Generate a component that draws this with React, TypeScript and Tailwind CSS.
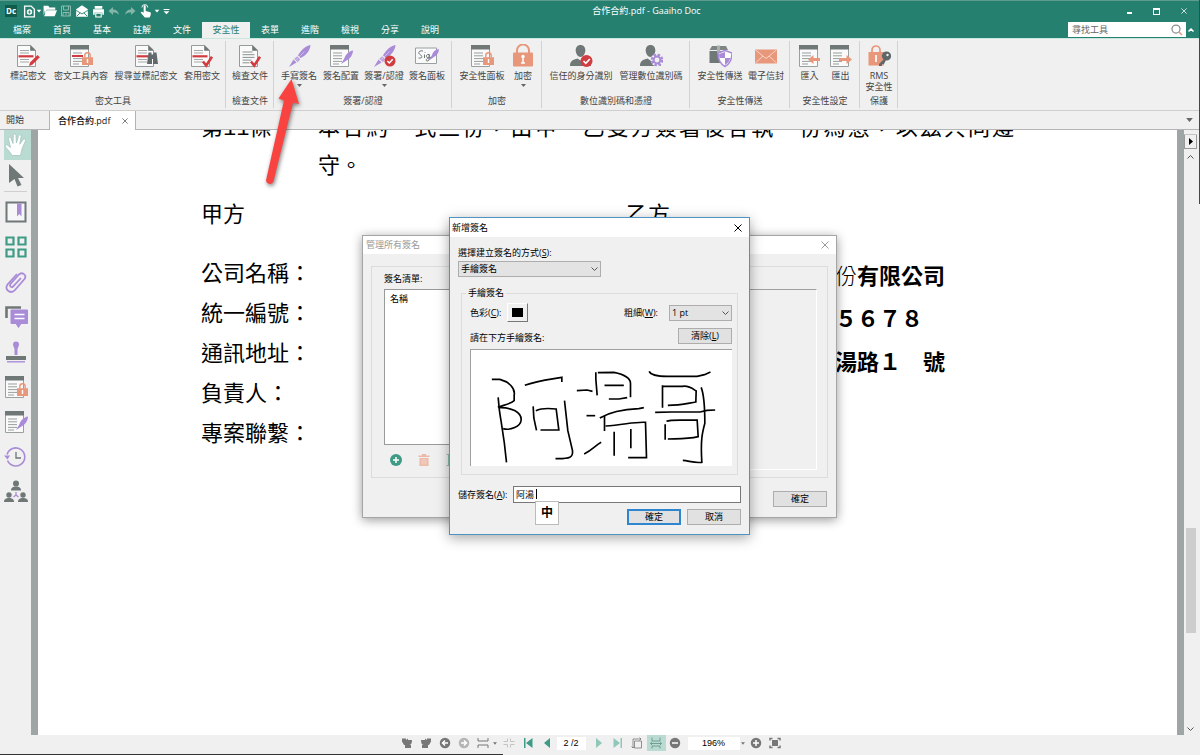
import type { ReactNode } from 'react';
import clsx from 'clsx';

const GRAY = '#6f7777';
const RED = '#d03c3f';
const SALMON = '#e8977a';
const PURPLE = '#a98bd8';
const GREEN = '#3f9b85';

function Icon({ size = 24, children }: { size?: number; children: ReactNode }) {
  return (
    <svg width={size} height={size} viewBox="0 0 24 24" fill="none" className="shrink-0">
      {children}
    </svg>
  );
}

/* ---------- shared icon pieces ---------- */

const Page = ({ redact = false }: { redact?: boolean }) => (
  <>
    <path d="M1.5 1.5h13.2l4.8 4.8v16.2h-18z" fill="#fafafa" stroke="#959b9b" />
    <path d="M14.2 1v5.8H20z" fill={GRAY} />
    {redact ? (
      <>
        <path d="M4 6.5h9M4 9h9M4 15.5h9M4 18h9" stroke="#a5a9a9" />
        <path d="M2.5 12.3h15" stroke={RED} strokeWidth="2.2" />
      </>
    ) : (
      <path d="M4.5 8h10M4.5 10.7h12M4.5 13.4h12M4.5 16.1h9M4.5 18.8h7" stroke="#8b9090" />
    )}
  </>
);

const Panel = ({ redact = false }: { redact?: boolean }) => (
  <>
    <path d="M1.5 2v20.5h18V2" fill="#fafafa" stroke="#9aa0a0" />
    <path d="M1 1h19v4.5H1z" fill={GRAY} />
    <path d="M4 9h9M4 11.8h9M4 14.6h9M4 17.4h9M4 20h6" stroke="#989d9d" />
    {redact && <path d="M3 12h11" stroke={RED} strokeWidth="2" />}
  </>
);

const Check = () => <path d="M13 17.5l3.2 4L22 12.8" stroke={RED} strokeWidth="2.6" />;

const SmallLock = () => (
  <>
    <path d="M15.8 13.5v-2a2.7 2.7 0 015.4 0v2" stroke={SALMON} strokeWidth="1.4" />
    <path d="M13 13.2h11V21H13z" fill={SALMON} />
    <path d="M18.5 15v4" stroke="#fff" strokeWidth="1.4" />
  </>
);

const Quill = () => (
  <>
    <path d="M23.5 1c-5 1-9.500 5-12.500 10.500l2.500 2.500C18.500 12 23 7 23.500 1z" fill={PURPLE} />
    <path d="M10.200 12.300l3 3-2.400 3-3.600-3.600z" fill="#bda5e2" />
    <path d="M6.500 15.500l3 3L2 23z" fill={PURPLE} />
    <path d="M9.500 15.500l8-8" stroke="#d6c8ee" strokeWidth=".8" />
  </>
);

const SmallQuill = () => (
  <path d="M24 6.500c-4 .5-7.500 4-8.500 7.500l-3.500 6 5.500-3.500c3.500-1.500 6.500-6 6.500-10z" fill={PURPLE} />
);

const Person = () => (
  <>
    <path d="M11.500 1c3 0 4.800 2.200 4.800 5.300 0 3.400-2.100 6.700-4.800 6.700s-4.800-3.300-4.800-6.700C6.700 3.200 8.500 1 11.500 1z" fill={GRAY} />
    <path d="M1 22c0-5 3-6.500 7.500-7.500l3 2 3-2C19 15.500 22 17 22 22z" fill={GRAY} />
  </>
);

const icons: Record<string, ReactNode> = {
  mark: (
    <>
      <Page redact />
      <path d="M13 22l1-3.500 7.500-7.500 2.300 2.300-7.500 7.500z" fill={RED} />
    </>
  ),
  panelLock: (
    <>
      <Panel redact />
      <SmallLock />
    </>
  ),
  find: (
    <>
      <Page redact />
      <path d="M14.500 8.500h3v2h2v-2h3L24 20h-5v-5h-1v5h-5z" fill="#62696d" />
    </>
  ),
  apply: (
    <>
      <Page redact />
      <Check />
    </>
  ),
  inspect: (
    <>
      <Page />
      <Check />
    </>
  ),
  quill: <Quill />,
  panelQuill: (
    <>
      <Panel />
      <SmallQuill />
    </>
  ),
  signCheck: (
    <>
      <Quill />
      <circle cx="18" cy="17" r="5.500" fill={RED} />
      <path d="M15.300 17l2 2 3.400-3.800" stroke="#fff" strokeWidth="1.500" />
    </>
  ),
  signPanel: (
    <>
      <path d="M.5 4h21v15.500H.5z" fill="#fafafa" stroke="#9aa0a0" />
      <path
        d="M8 7C4 6 2.500 9 5 10.500s3 4-1.500 3.500M9.500 10.500v3.500M10 8v.6M14 10.500c-3-1-3.500 3.500-1 3.200 1 0 1.300-2 1.300-3.200 0 3 .4 6-1.300 6.500-2 .4-2.500-1.500-.5-2.500l4-1.500"
        stroke={GRAY}
      />
      <path d="M24 5c-4 .5-6 3-7 6l-3 5.500 5-3.500c3-1.500 5-4.500 5-8z" fill={PURPLE} />
    </>
  ),
  securityPanel: (
    <>
      <Panel />
      <SmallLock />
    </>
  ),
  lock: (
    <>
      <path d="M6 9V6.500a6 6 0 0112 0V9" stroke={SALMON} strokeWidth="2" />
      <rect x="2" y="8.500" width="20" height="14" rx="1" fill={SALMON} />
      <path d="M12 12v7M10 19h4" stroke="#fff" strokeWidth="1.500" />
      <circle cx="12" cy="12.500" r="1.700" fill="#fff" />
    </>
  ),
  trusted: (
    <>
      <Person />
      <circle cx="17.500" cy="17" r="6" fill={RED} />
      <path d="M14.500 17l2.300 2.300 4-4.300" stroke="#fff" strokeWidth="1.700" />
    </>
  ),
  manageId: (
    <>
      <Person />
      <circle cx="18" cy="16" r="6.400" fill="#f0f0f0" />
      <circle cx="18" cy="16" r="5" stroke={PURPLE} strokeWidth="2.600" strokeDasharray="2.400 1.530" />
      <circle cx="18" cy="16" r="3.400" stroke={PURPLE} strokeWidth="2" />
    </>
  ),
  send: (
    <>
      <path d="M4 2h14l2 4H1.500z" fill="#7f8585" />
      <path d="M1.500 7h18v12h-18z" fill={GRAY} />
      <path d="M9 1.500h3V9H9z" fill="#aab0b0" />
      <path d="M17 6.500l7 2.500c0 7-2.500 11-7 13.500-4.500-2.500-7-6.500-7-13.500z" fill="#fff" stroke={PURPLE} strokeWidth="1.500" />
      <path d="M17 8v6h-5.300c-.5-1.500-.6-2.500-.7-4zM17 14h5.300c-.8 3-2.300 5-5.300 7z" fill={PURPLE} />
    </>
  ),
  envelope: (
    <>
      <path d="M1 5.500h22v14H1z" fill={SALMON} />
      <path d="M1.500 6L12 14.500 22.500 6M1.500 19l7.500-7M22.500 19L15 12" stroke="#f7d5c8" />
    </>
  ),
  importDoc: (
    <>
      <Panel />
      <path d="M10 15.500l5.500-4.500v3H22v3h-6.500v3z" fill={SALMON} />
    </>
  ),
  exportDoc: (
    <>
      <Panel />
      <path d="M23 15.500L17.500 11v3H10v3h7.500v3z" fill={SALMON} />
    </>
  ),
  rms: (
    <>
      <path d="M5 8V6a4 4 0 018 0v2" stroke={SALMON} strokeWidth="1.700" />
      <path d="M1.500 8h15.500v13.500H1.500z" fill={SALMON} />
      <path d="M9 11v7" stroke="#fff" strokeWidth="1.700" />
      <circle cx="19.500" cy="12" r="3.500" stroke="#5f6769" strokeWidth="2.200" fill="#5f6769" />
      <path d="M17.500 14.500L12 20v2h3v-2h2l2-4" fill="#5f6769" />
      <circle cx="20.500" cy="11" r="1.200" fill="#f0f0f0" />
    </>
  ),
};

type Tool = { label: string; icon: string; width: string; menu?: boolean };

const groups: { title: string; tools: Tool[] }[] = [
  {
    title: '密文工具',
    tools: [
      { label: '標記密文', icon: 'mark', width: 'w-12' },
      { label: '密文工具內容', icon: 'panelLock', width: 'w-[58px]' },
      { label: '搜尋並標記密文', icon: 'find', width: 'w-[72px]' },
      { label: '套用密文', icon: 'apply', width: 'w-10' },
    ],
  },
  { title: '檢查文件', tools: [{ label: '檢查文件', icon: 'inspect', width: 'w-10' }] },
  {
    title: '簽署/認證',
    tools: [
      { label: '手寫簽名', icon: 'quill', width: 'w-[42px]', menu: true },
      { label: '簽名配置', icon: 'panelQuill', width: 'w-[42px]' },
      { label: '簽署/認證', icon: 'signCheck', width: 'w-11', menu: true },
      { label: '簽名面板', icon: 'signPanel', width: 'w-[42px]' },
    ],
  },
  {
    title: '加密',
    tools: [
      { label: '安全性面板', icon: 'securityPanel', width: 'w-[52px]' },
      { label: '加密', icon: 'lock', width: 'w-[30px]', menu: true },
    ],
  },
  {
    title: '數位識別碼和憑證',
    tools: [
      { label: '信任的身分識別', icon: 'trusted', width: 'w-[70px]' },
      { label: '管理數位識別碼', icon: 'manageId', width: 'w-[70px]' },
    ],
  },
  {
    title: '安全性傳送',
    tools: [
      { label: '安全性傳送', icon: 'send', width: 'w-[52px]' },
      { label: '電子信封', icon: 'envelope', width: 'w-10' },
    ],
  },
  {
    title: '安全性設定',
    tools: [
      { label: '匯入', icon: 'importDoc', width: 'w-[31px]' },
      { label: '匯出', icon: 'exportDoc', width: 'w-[31px]' },
    ],
  },
  { title: '保護', tools: [{ label: 'RMS\n安全性', icon: 'rms', width: 'w-[30px]' }] },
];

const menuTabs = ['檔案', '首頁', '基本', '註解', '文件', '安全性', '表單', '進階', '檢視', '分享', '說明'];

const Caret = ({ className }: { className?: string }) => (
  <svg width="5" height="3" viewBox="0 0 5 3" fill="currentColor" className={className}>
    <path d="M0 0h5L2.500 3z" />
  </svg>
);

const Cross = ({ size = 8 }: { size?: number }) => (
  <svg width={size} height={size} viewBox="0 0 8 8" fill="none" stroke="currentColor">
    <path d="M.5.5l7 7M7.500.5l-7 7" />
  </svg>
);

/* ---------- title bar ---------- */

const quickTools: { name: string; width: string; size: number; art: ReactNode }[] = [
  {
    name: '新增',
    width: 'w-[14px]',
    size: 13,
    art: (
      <>
        <path d="M3 2h12l6 6v14H3z" stroke="#fff" strokeWidth="2.500" />
        <circle cx="12" cy="13" r="5" fill="#fff" />
        <path d="M12 10v6M9 13h6" stroke="#26806f" strokeWidth="1.500" />
      </>
    ),
  },
  { name: '新增選單', width: 'w-[6px]', size: 6, art: <path d="M3 7h18l-9 11z" fill="#fff" /> },
  {
    name: '開啟',
    width: 'w-4',
    size: 14,
    art: <path d="M1 3h8l2 3h10v4H6l-3 8V10L1 20zM6 10.500h18L20 21H2z" fill="#fff" />,
  },
  {
    name: '儲存',
    width: 'w-4',
    size: 12,
    art: (
      <>
        <path d="M3 2h18v20H3z" stroke="#8abcae" strokeWidth="2" />
        <path d="M7 2v8h10V2M6 22v-7h12v7M10 18h4" stroke="#8abcae" strokeWidth="2" />
      </>
    ),
  },
  {
    name: '郵件',
    width: 'w-4',
    size: 14,
    art: (
      <>
        <path d="M2 9L12 2l10 7v13H2z" fill="#fff" />
        <path d="M2 11l10 6 10-6M3 21l6-6M21 21l-6-6" stroke="#26806f" strokeWidth="1.500" />
      </>
    ),
  },
  {
    name: '列印',
    width: 'w-4',
    size: 13,
    art: (
      <>
        <path d="M5 2h14v5H5zM2 8h20v10h-3v-4H5v4H2z" fill="#fff" />
        <path d="M7 15h10v7H7z" stroke="#fff" strokeWidth="2" />
      </>
    ),
  },
  { name: '復原', width: 'w-4', size: 12, art: <path d="M10 4v5c7 0 11 4 12 11-3-4-6-5-12-5v5L1 12z" fill="#83b5a9" /> },
  { name: '重做', width: 'w-4', size: 12, art: <path d="M14 4v5C7 9 3 13 2 20c3-4 6-5 12-5v5l9-8z" fill="#83b5a9" /> },
  {
    name: '觸控',
    width: 'w-4',
    size: 14,
    art: (
      <>
        <path d="M8 4c0-2.500 3.500-2.500 3.500 0v8l8 2c1.500 1 1 6-1.500 9h-8L3 15c0-2 2-2.500 5 0z" fill="#fff" />
        <path d="M5 6a5 5 0 0110 0" stroke="#fff" strokeWidth="1.500" />
      </>
    ),
  },
  { name: '觸控選單', width: 'w-[6px]', size: 6, art: <path d="M3 7h18l-9 11z" fill="#fff" /> },
  { name: '自訂', width: 'w-3', size: 7, art: <path d="M2 3h20v4H2zM2 11h20L12 21z" fill="#fff" /> },
];

function TitleBar() {
  return (
    <header className="border-t border-[#5c9d8f] bg-[#26806f] text-white">
      <div className="grid h-[20px] grid-cols-[1fr_auto_1fr] items-center">
        <div className="flex items-center">
          <div className="flex w-[22px] justify-center">
            <span className="flex h-3 w-3 items-center justify-center bg-[#0f5b4c] text-[8px] leading-3 font-bold">Dc</span>
          </div>
          {quickTools.map((tool) => (
            <button key={tool.name} aria-label={tool.name} className={clsx('flex justify-center', tool.width)}>
              <Icon size={tool.size}>{tool.art}</Icon>
            </button>
          ))}
        </div>
        <h1 className="pl-[93px] text-[9px] leading-3">合作合約.pdf - Gaaiho Doc</h1>
        <div className="flex justify-end pr-[3px]">
          <button aria-label="最小化" className="flex w-[27px] items-center justify-center pt-1">
            <span className="h-0.5 w-[5px] bg-white" />
          </button>
          <button aria-label="最大化" className="flex w-[27px] items-center justify-center">
            <span className="h-[7px] w-[7px] border border-t-2 border-white" />
          </button>
          <button aria-label="關閉" className="flex w-[27px] items-center justify-center">
            <Cross size={6} />
          </button>
        </div>
      </div>
      <div className="flex h-[17px] items-end justify-between">
        <nav className="flex pl-0.5 text-[9px]">
          {menuTabs.map((tab) => (
            <button
              key={tab}
              className={clsx('h-4 leading-4', tab === '安全性' ? 'w-12 bg-[#f0f0f0] text-[#26806f]' : 'w-10 text-white')}
            >
              {tab}
            </button>
          ))}
        </nav>
        <div className="mb-px flex items-center gap-0.5 pr-1.5">
          <label className="flex h-[15px] w-[118px] items-center bg-white pr-[3px]">
            <input
              type="search"
              aria-label="尋找工具"
              placeholder="尋找工具"
              className="w-0 flex-1 px-1 text-[9px] leading-3 text-black outline-none placeholder:text-[#666]"
            />
            <Icon size={12}>
              <circle cx="10" cy="10" r="8" stroke="#8a8f8f" strokeWidth="2.500" />
              <path d="M16 16l6 6" stroke={SALMON} strokeWidth="3" />
            </Icon>
          </label>
          <button aria-label="收合功能區">
            <svg width="6" height="4" viewBox="0 0 6 4" fill="none" stroke="#fff" strokeWidth="1.500">
              <path d="M.5 3.500L3 1l2.500 2.500" />
            </svg>
          </button>
        </div>
      </div>
    </header>
  );
}

function Ribbon() {
  return (
    <section className="flex h-[73px] border-t border-b border-t-[#c9e6df] border-b-[#cfcfcf] bg-[#f0f0f0] py-0.5 text-[9px] text-[#444]">
      {groups.map((group) => (
        <div key={group.title} className="flex flex-col border-r border-[#d2d2d2] pr-[3px] pl-1">
          <div className="flex flex-1">
            {group.tools.map((tool) => (
              <button key={tool.label} className={clsx('flex flex-col items-center pt-[3px]', tool.width)}>
                <Icon>{icons[tool.icon]}</Icon>
                <span className="mt-0.5 leading-[11px] whitespace-pre">{tool.label}</span>
                {tool.menu && <Caret className="mt-[3px] text-[#666]" />}
              </button>
            ))}
          </div>
          <div className="text-center leading-[14px] whitespace-nowrap">{group.title}</div>
        </div>
      ))}
    </section>
  );
}

function FileTabs() {
  return (
    <div className="flex h-[19px] items-stretch border-b border-[#b4b4b4] bg-[#f0f0f0] text-[9px] text-[#333]">
      <button className="w-[49px] pl-1.5 text-left">開始</button>
      <div className="-mb-px flex w-[87px] items-center justify-between border-x border-[#b4b4b4] bg-white pr-[7px] pl-2">
        <button className="font-medium text-[#111]">合作合約.pdf</button>
        <button aria-label="關閉分頁" className="text-[#555]">
          <Cross size={6} />
        </button>
      </div>
      <button aria-label="分頁清單" className="ml-auto px-[7px] text-[#666]">
        <Caret className="h-1 w-[7px]" />
      </button>
    </div>
  );
}

/* ---------- side bar ---------- */

const sideTools: { name: string; art: ReactNode }[] = [
  {
    name: '書籤',
    art: (
      <>
        <path d="M2.500 2.500h19v19h-19z" fill="#f7f7f7" stroke={GRAY} strokeWidth="2" />
        <path d="M13 3.500h4.500v13L15.200 14 13 16.500z" fill={PURPLE} />
      </>
    ),
  },
  {
    name: '縮圖',
    art: <path d="M2.500 2.500h7v7h-7zM14.500 2.500h7v7h-7zM2.500 14.500h7v7h-7zM14.500 14.500h7v7h-7z" stroke={GREEN} strokeWidth="2.200" />,
  },
  {
    name: '附件',
    art: (
      <path
        d="M17 8l-8 8.500c-1.500 1.500-4-.5-2.500-2.500l8.500-9.500c3-3 8.500.5 5.500 4.500L11 20c-4 4.500-11 0-7.500-5.500L13 4"
        stroke={PURPLE}
        strokeWidth="1.800"
      />
    ),
  },
  {
    name: '註解',
    art: (
      <>
        <path d="M2.500 13V2.500H17" stroke={GRAY} strokeWidth="2.600" />
        <path d="M7 5h16.500v13.500H17l-2.500 4-2.500-4H7z" fill={PURPLE} stroke={PURPLE} strokeLinejoin="round" />
        <path d="M10.500 9.500h10M10.500 13.500h10" stroke="#fff" strokeWidth="1.600" />
      </>
    ),
  },
  {
    name: '印章',
    art: (
      <>
        <path d="M9 4.500a3 3 0 016 0c0 2-1.500 3-1.500 5V15h-3V9.500c0-2-1.500-3-1.500-5z" fill={PURPLE} />
        <path d="M2 16h20v4H2z" fill={GRAY} />
        <path d="M3 21.800h18" stroke={PURPLE} strokeWidth="1.400" />
      </>
    ),
  },
  { name: '安全性', art: icons.securityPanel },
  { name: '簽名', art: icons.panelQuill },
  {
    name: '歷程',
    art: (
      <>
        <path d="M3.500 15.500a9 9 0 10-.4-6" stroke={PURPLE} strokeWidth="1.600" />
        <path d="M0 10.500h6L3.500 14.500z" fill={PURPLE} />
        <path d="M12 7v6h5" stroke={GRAY} strokeWidth="1.300" />
      </>
    ),
  },
  {
    name: '共用',
    art: (
      <>
        <circle cx="12" cy="3.500" r="3" fill={GRAY} />
        <path d="M7 10.500c0-3 2-4 5-4s5 1 5 4z" fill={GRAY} />
        <circle cx="5" cy="15" r="2.700" fill={GRAY} />
        <path d="M0 22c0-3 2-4 5-4s5 1 5 4z" fill={GRAY} />
        <circle cx="19" cy="15" r="2.700" fill={GRAY} />
        <path d="M14 22c0-3 2-4 5-4s5 1 5 4z" fill={GRAY} />
        <path d="M12 12v3l-2.500 2M12 15l2.500 2" stroke={PURPLE} strokeWidth="1.300" />
      </>
    ),
  },
];

function SideBar() {
  return (
    <aside className="flex w-[31px] shrink-0 flex-col bg-[#f0f0f0] pl-1">
      <button aria-label="手形工具" className="flex h-[30px] items-center bg-[#b9dbd2]">
        <Icon>
          <path
            d="M8 22.500c-1.500-3-4-5.500-6.500-8.500-1-1.700 1-3 2.500-1.500l2.500 2L4.500 6c-.4-2 2-2.500 2.600-.6L9 10.500l.3-8c0-2 2.600-2 2.700 0l.4 7.500 2-7c.6-1.900 3-1.300 2.700.7l-1.300 7.500 3.200-4.500c1.200-1.500 3.200-.3 2.300 1.500L18 16l-1.500 6.500z"
            fill="#fff"
            stroke="#a4c4bc"
            strokeWidth=".8"
          />
        </Icon>
      </button>
      <button aria-label="選取工具" className="flex h-[30px] items-center">
        <Icon>
          <path d="M5 1l15 14h-6l3.500 7-4 1.500L10.500 16 5 20z" fill={GRAY} />
        </Icon>
      </button>
      <hr className="mt-px mb-0.5 mr-1 border-[#cfcfcf]" />
      {sideTools.map((tool) => (
        <button key={tool.name} aria-label={tool.name} className="flex h-[35px] items-center">
          <Icon>{tool.art}</Icon>
        </button>
      ))}
    </aside>
  );
}

function PdfPage() {
  return (
    <article className="min-w-0 flex-1 overflow-hidden bg-white pl-[163px] text-[22px] whitespace-nowrap text-black">
      <div className="-mt-[23px] grid grid-cols-[117px_696px] leading-[38px]">
        <span>
          第<span className="font-['Liberation_Mono',monospace] leading-none">11</span>條
        </span>
        <p className="[text-align-last:justify]">本合約一式三份，由甲、乙雙方簽署後各執一份為憑，以茲共同遵</p>
        <p className="col-start-2">守。</p>
      </div>
      <div className="mt-2.5 grid grid-cols-[425px_1fr] leading-10">
        <p>甲方</p>
        <p>乙方</p>
      </div>
      <div className="mt-[19px] grid grid-cols-[425px_1fr] leading-10">
        <div>
          <p>公司名稱：</p>
          <p>統一編號：</p>
          <p>通訊地址：</p>
          <p>負責人：</p>
          <p>專案聯繫：</p>
        </div>
        <div className="pt-0.5 pl-[209px] leading-[43px] font-bold">
          <p>
            <span className="font-light">份</span>有限公司
          </p>
          <p>５６７８</p>
          <p>湯路１　號</p>
        </div>
      </div>
    </article>
  );
}

function ScrollBar() {
  return (
    <div className="flex w-[13px] shrink-0 flex-col items-center bg-[#f0f0f0]">
      <div className="h-[5px] w-full border-b border-[#c4c4c4]" />
      <button aria-label="展開面板" className="flex h-3.5 w-full items-center justify-center border border-t-0 border-[#999]">
        <svg width="4" height="7" viewBox="0 0 4 7">
          <path d="M0 0l4 3.500L0 7z" />
        </svg>
      </button>
      <svg width="7" height="4" viewBox="0 0 7 4" fill="none" stroke="#555" className="mt-1.5 shrink-0">
        <path d="M.5 3.500l3-3 3 3" />
      </svg>
      <div className="flex-[369]" />
      <div className="w-2.5 flex-[105] bg-[#cdcdcd]" />
      <div className="flex-[94]" />
      <svg width="7" height="4" viewBox="0 0 7 4" fill="none" stroke="#555" className="mb-1 shrink-0">
        <path d="M.5.5l3 3 3-3" />
      </svg>
    </div>
  );
}

/* ---------- status bar ---------- */

const circle = (fill: string, mark: string) => (
  <>
    <circle cx="12" cy="12" r="10.500" fill={fill} />
    <path d={mark} stroke="#fff" strokeWidth="3" />
  </>
);

const navBefore: { name: string; art: ReactNode }[] = [
  { name: '向左旋轉', art: <path d="M2 3h8v3l4-3v3h8c0 7-2 9-5 10h3v6H8v-6H6L2 9z" fill="#777" /> },
  { name: '向右旋轉', art: <path d="M22 3h-8v3l-4-3v3H2c0 7 2 9 5 10H4v6h12v-6h2l4-7z" fill="#777" /> },
  { name: '上一檢視', art: circle('#777', 'M18 12H8M12 7l-5 5 5 5') },
  { name: '下一檢視', art: circle('#b5b5b5', 'M6 12h10M12 7l5 5-5 5') },
  { name: '捲動', art: <path d="M2 2v6h20V2M2 22v-6h20v6" stroke="#777" strokeWidth="2" /> },
];

function StatusButton({ name, children, active }: { name: string; children: ReactNode; active?: boolean }) {
  return (
    <button aria-label={name} className={clsx('flex h-4 w-[19px] items-center justify-center', active && 'bg-[#b9dbd2]')}>
      <Icon size={12}>{children}</Icon>
    </button>
  );
}

function StatusBar() {
  return (
    <footer className="flex h-[20px] shrink-0 items-start justify-center bg-[#f0f0f0] pr-[18px] text-[9px]">
      {navBefore.map((item) => (
        <StatusButton key={item.name} name={item.name}>
          {item.art}
        </StatusButton>
      ))}
      <span className="flex h-4 w-[7px] items-center text-[#777]">
        <Caret className="w-1" />
      </span>
      <StatusButton name="縮小視窗">
        <path d="M9 3v6H1M15 3v6h8M9 21v-6H1M15 21v-6h8" stroke="#c4c4c4" strokeWidth="2" />
      </StatusButton>
      <StatusButton name="第一頁">
        <path d="M4 2h3v20H4zM21 2v20L8 12z" fill={GREEN} />
      </StatusButton>
      <StatusButton name="上一頁">
        <path d="M18 2v20L6 12z" fill={GREEN} />
      </StatusButton>
      <input aria-label="頁碼" defaultValue="2 /2" className="mt-0.5 mr-1 h-[13px] w-[29px] bg-white text-center font-['Liberation_Sans',sans-serif]" />
      <StatusButton name="下一頁">
        <path d="M6 2v20l12-10z" fill="#8fc7b9" />
      </StatusButton>
      <StatusButton name="最後一頁">
        <path d="M17 2h3v20h-3zM3 2v20l13-10z" fill="#8fc7b9" />
      </StatusButton>
      <StatusButton name="符合頁面">
        <path d="M7 8h14v14H7zM4 22V4h16M1 19l3 3 3-3M17 1l3 3-3 3" stroke="#777" strokeWidth="1.600" />
      </StatusButton>
      <StatusButton name="符合寬度" active>
        <path d="M4 1v7h16V1M4 23v-5h16v5M1 13h22M4 10l-3 3 3 3M20 10l3 3-3 3" stroke="#5f8f84" strokeWidth="1.600" />
      </StatusButton>
      <StatusButton name="縮小">{circle('#777', 'M6 12h12')}</StatusButton>
      <input aria-label="縮放比例" defaultValue="196%" className="mt-0.5 ml-[3px] h-[13px] w-[52px] bg-white text-center font-['Liberation_Sans',sans-serif]" />
      <span className="flex h-4 w-[7px] items-center justify-center text-[#777]">
        <Caret className="w-1" />
      </span>
      <StatusButton name="放大">{circle('#777', 'M6 12h12M12 6v12')}</StatusButton>
      <StatusButton name="全螢幕">
        <path d="M6 6h12v12H6z" fill="#777" />
        <path d="M2 7V3h5M17 3h5v4M22 17v4h-5M7 21H2v-4" stroke="#777" strokeWidth="3" />
      </StatusButton>
    </footer>
  );
}

/* ---------- dialogs ---------- */

function DialogButton({ children, primary }: { children: ReactNode; primary?: boolean }) {
  return (
    <button
      className={clsx(
        'flex h-4 w-[54px] items-center justify-center bg-[#e1e1e1] text-[9px]',
        primary ? 'border-2 border-[#2f86cf]' : 'border border-[#adadad]',
      )}
    >
      {children}
    </button>
  );
}

function Select({ id, value, className }: { id: string; value: string; className: string }) {
  return (
    <div className={clsx('relative', className)}>
      <select id={id} className="block h-4 w-full appearance-none border border-[#adadad] bg-[#e3e3e3] px-0.5 text-[9px] leading-[14px]">
        <option>{value}</option>
      </select>
      <svg width="7" height="4" viewBox="0 0 7 4" fill="none" stroke="#555" className="absolute top-1.5 right-[3px]">
        <path d="M.5.5l3 3 3-3" />
      </svg>
    </div>
  );
}

function ManageDialog() {
  return (
    <section
      role="dialog"
      aria-label="管理所有簽名"
      className="absolute top-[235px] left-[362px] flex h-[283px] w-[475px] flex-col border border-[#a5a5a5] bg-[#f0f0f0] text-[9px] shadow-[0_2px_10px_rgba(0,0,0,0.4)]"
    >
      <div className="flex h-[18px] items-center justify-between bg-white pr-[7px] pl-[3px] text-[#999]">
        <h2>管理所有簽名</h2>
        <button aria-label="關閉">
          <Cross />
        </button>
      </div>
      <div className="mx-2 mt-3 flex h-[212px] flex-col border border-[#dcdcdc] pr-2.5 pl-3">
        <h3 className="mt-[5px] mb-1 leading-[13px]">簽名清單:</h3>
        <div className="flex gap-3">
          <div className="h-[156px] w-[200px] border border-[#999] bg-white px-[5px] py-0.5">名稱</div>
          <div className="h-[181px] flex-1 border border-t-[#a0a0a0] border-r-white border-b-white border-l-[#a0a0a0]" />
        </div>
        <div className="-mt-4 flex gap-4 pl-1.5">
          <button aria-label="新增">
            <Icon size={12}>
              <circle cx="12" cy="12" r="12" fill={GREEN} />
              <path d="M12 6v12M6 12h12" stroke="#fff" strokeWidth="3" />
            </Icon>
          </button>
          <button aria-label="刪除">
            <Icon size={12}>
              <path d="M1 3h7V0h8v3h7v3H1zM3 8h18v16H3z" fill="#ecb9a8" />
              <path d="M8 10v11M12 10v11M16 10v11" stroke="#f7ded6" strokeWidth="1.500" />
            </Icon>
          </button>
          <button aria-label="重新命名">
            <Icon size={12}>
              <path d="M1 1h8M1 23h8M5 1v22M9 6h14v12H9" stroke="#8fc0b3" strokeWidth="2" />
            </Icon>
          </button>
        </div>
      </div>
      <div className="mt-[13px] flex justify-end pr-[9px]">
        <DialogButton>確定</DialogButton>
      </div>
    </section>
  );
}

const strokes = [
  'M394 118h24C445 125 465 145 461 165v17C450 192 425 196 412 202',
  'M413 172l3 33C420 240 430 280 438 367',
  'M418 203C450 202 483 215 482 240C480 260 450 272 428 266',
  'M493 136C530 122 570 118 604 112v14',
  'M518 199l2 35 8 37',
  'M526 212C545 203 570 205 587 207l8 63h-55',
  'M612 182l10 90 14 60C638 352 630 357 585 356',
  'M649 152l31-2 16 4',
  'M678 227h26',
  'M671 342C695 330 705 316 722 307',
  'M706 97v20l4 49',
  'M712 98l48-1C790 103 810 115 810 130v42',
  'M732 136h58M745 177l30 0 25-4',
  'M718 234C750 215 790 208 835 206l15-3',
  'M732 228v45',
  'M735 258C790 255 820 245 855 247l3 106h-55',
  'M761 275v72M811 267v58',
  'M866 94C872 108 900 109 920 109h90l22-5 18-8',
  'M906 136v67M906 139h60C985 136 995 145 1007 153l-1 33C980 190 960 196 922 196',
  'M884 217l50-1h85l20-5 25-1',
  'M1022 142C1033 170 1033 220 1033 250C1025 280 1020 300 1024 367C1000 370 985 362 967 361',
  'M914 253v46M918 244C930 238 950 241 1010 240l3 50C980 298 950 296 922 297',
];

function SignatureDialog() {
  return (
    <section
      role="dialog"
      aria-label="新增簽名"
      className="absolute top-[217px] left-[449px] flex h-[318px] w-[301px] flex-col border border-[#4d93c4] bg-[#f0f0f0] text-[9px] shadow-[0_3px_12px_rgba(0,0,0,0.35)]"
    >
      <div className="flex h-[19px] items-center justify-between bg-white pr-[7px] pl-0.5">
        <h2>新增簽名</h2>
        <button aria-label="關閉">
          <Cross />
        </button>
      </div>
      <div className="flex flex-1 flex-col px-2">
        <label htmlFor="method" className="mt-2.5 mb-[3px] block leading-[11px]">
          選擇建立簽名的方式(<u>S</u>):
        </label>
        <Select id="method" value="手繪簽名" className="w-[143px]" />
        <fieldset className="mx-[3px] mt-2.5 border border-[#dcdcdc] pt-1 pr-[5px] pb-2 pl-2">
          <legend className="-ml-1 px-0.5 leading-3">手繪簽名</legend>
          <div className="flex h-[19px] items-center">
            <span>
              色彩(<u>C</u>):
            </span>
            <button aria-label="色彩" className="ml-1.5 border border-t-white border-r-[#777] border-b-[#777] border-l-white p-1">
              <span className="block h-[9px] w-[11px] bg-black" />
            </button>
            <label htmlFor="thickness" className="ml-auto">
              粗細(<u>W</u>):
            </label>
            <Select id="thickness" value="1 pt" className="ml-[11px] w-[63px]" />
          </div>
          <div className="flex h-[27px] items-center justify-between">
            <span className="pt-1">請在下方手繪簽名:</span>
            <DialogButton>
              清除(<u>L</u>)
            </DialogButton>
          </div>
          <div className="h-[117px] border-t border-l border-[#a0a0a0] bg-white">
            <svg viewBox="333 30 780 348" className="h-full w-full" fill="none" stroke="#000" strokeWidth="5">
              {strokes.map((d) => (
                <path key={d} d={d} />
              ))}
            </svg>
          </div>
        </fieldset>
        <div className="relative mt-[11px] flex items-center justify-between">
          <label htmlFor="sign-name">
            儲存簽名(<u>A</u>):
          </label>
          <input id="sign-name" defaultValue="阿湯" className="h-[17px] w-[228px] border border-[#777] bg-white px-0.5 text-[9px]" />
          <span className="absolute top-[3px] left-[78px] h-2.5 w-px bg-black" />
          <span className="absolute top-[15px] left-[77px] flex h-6 w-6 items-center justify-center border border-[#bbb] bg-white text-[12px] leading-none font-bold">
            中
          </span>
        </div>
        <div className="mt-1.5 flex justify-end gap-1.5">
          <DialogButton primary>確定</DialogButton>
          <DialogButton>取消</DialogButton>
        </div>
      </div>
    </section>
  );
}

function PointerArrow() {
  return (
    <svg width="60" height="120" viewBox="0 0 60 120" className="pointer-events-none absolute top-[75px] left-[255px] drop-shadow-[1px_2px_2px_rgba(0,0,0,0.5)]">
      <path d="M36.500 4L23.500 23.500l5.500 2L11.300 104a3.700 3.700 0 007.200 2.200L38 27.500l6 1.500z" fill="#f94340" />
    </svg>
  );
}

export default function App() {
  return (
    <div className="relative flex h-screen flex-col overflow-hidden bg-[#f0f0f0] font-['Open_Sans','Noto_Sans_CJK_TC',sans-serif]">
      <TitleBar />
      <Ribbon />
      <FileTabs />
      <main className="flex min-h-0 flex-1 pr-[3px]">
        <SideBar />
        <div className="w-[7px] shrink-0 bg-[#9fa4a4]" />
        <PdfPage />
        <div className="w-[7px] shrink-0 bg-[#9fa4a4]" />
        <ScrollBar />
      </main>
      <StatusBar />
      <ManageDialog />
      <SignatureDialog />
      <PointerArrow />
      <div className="absolute top-0 right-0 h-[204px] w-px bg-[#3f4a48]" />
      <div className="absolute bottom-0 left-0 h-px w-[503px] bg-[#333]" />
    </div>
  );
}
